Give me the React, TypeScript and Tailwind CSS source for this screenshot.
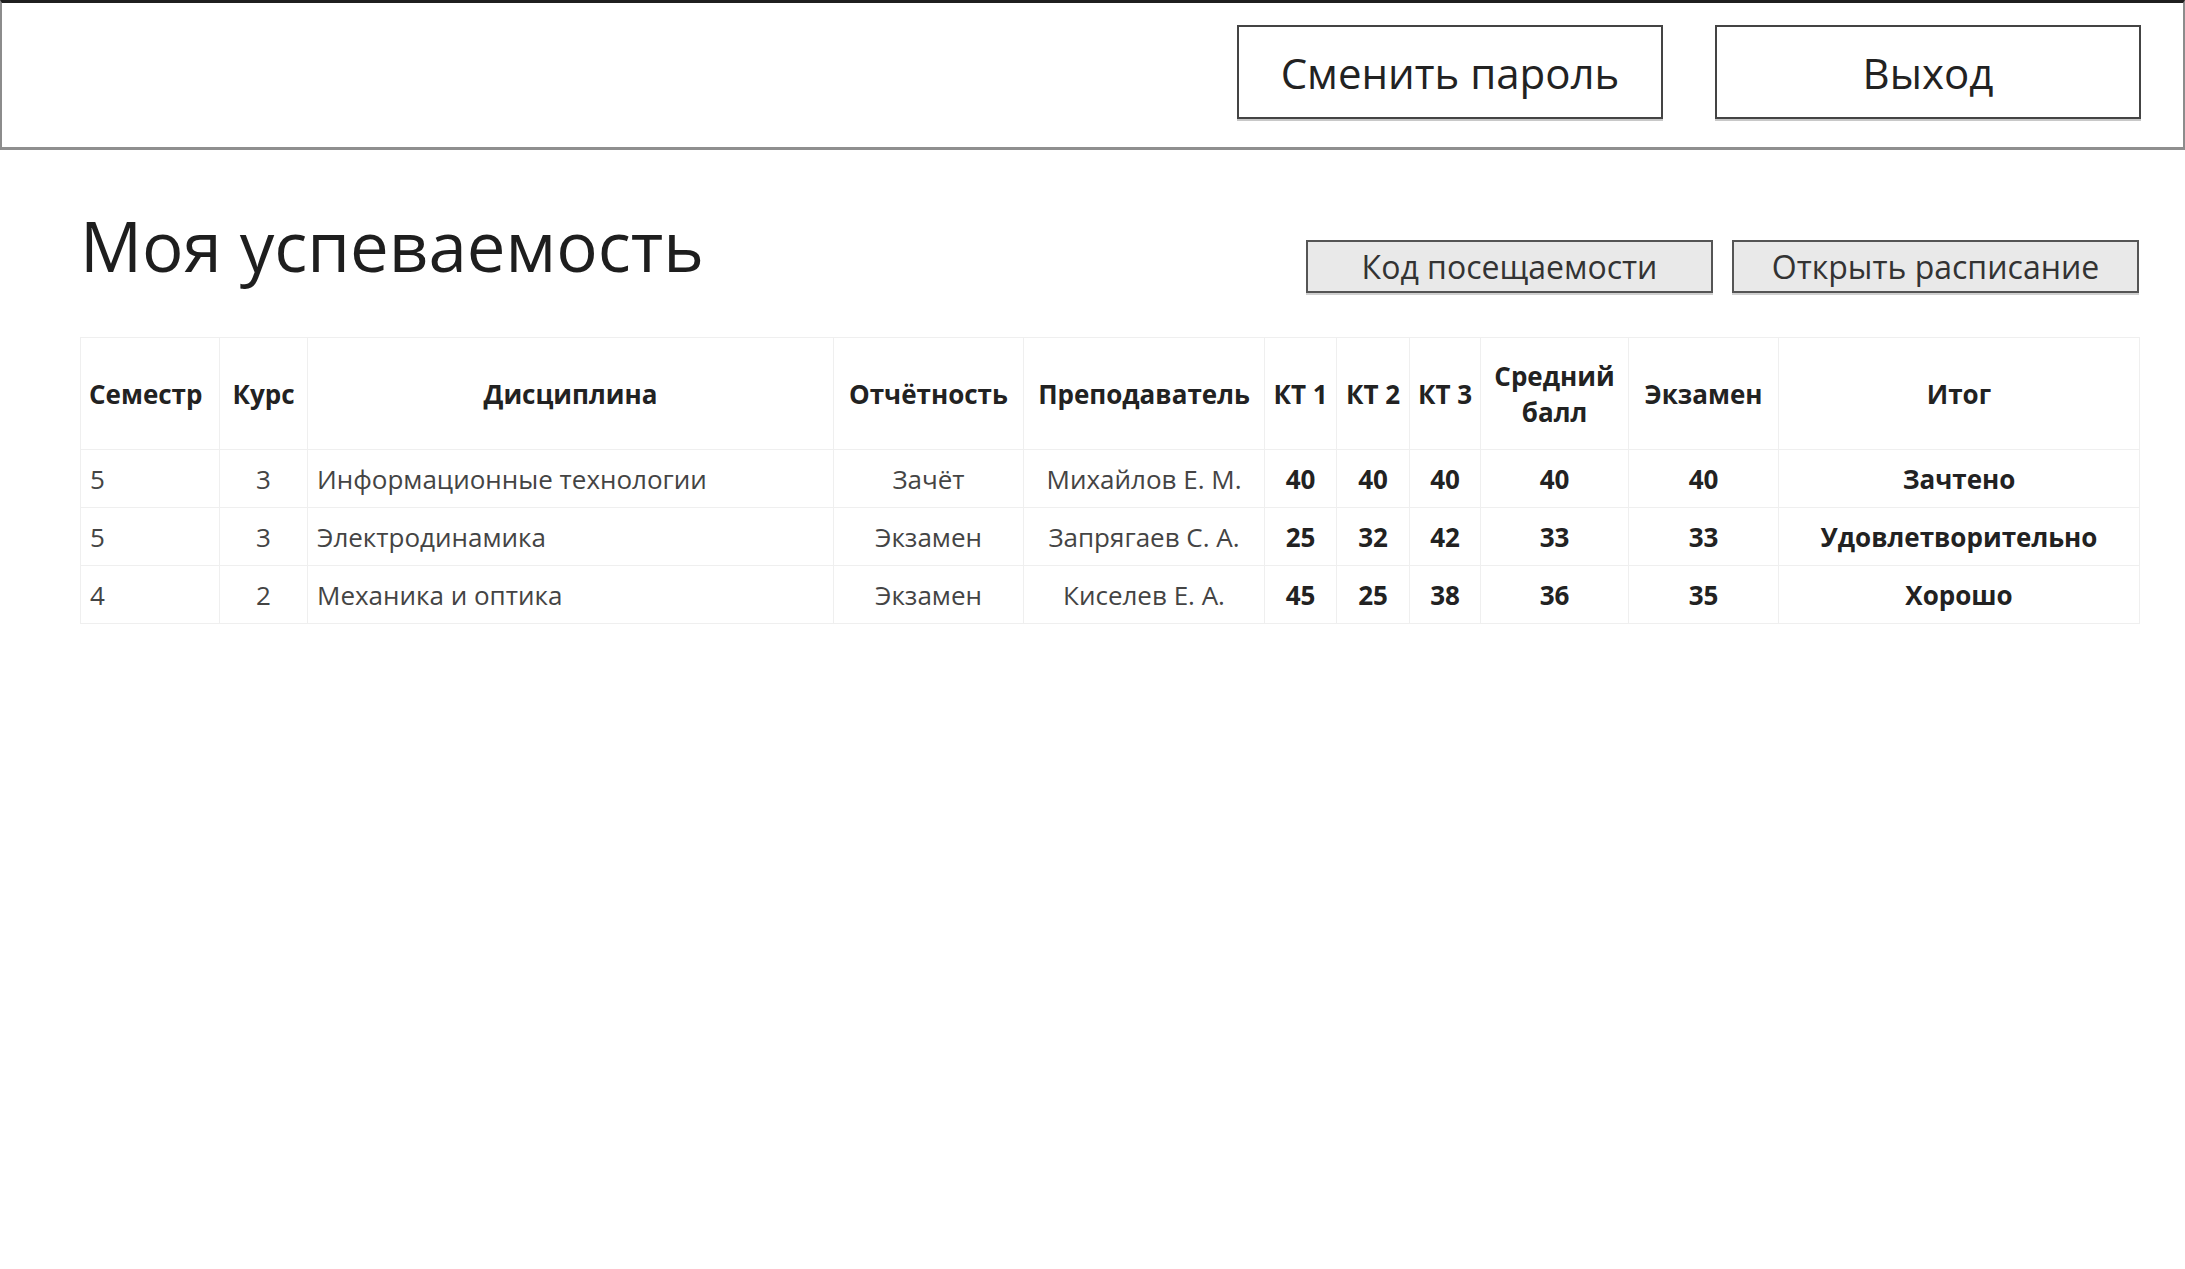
import React from 'react';

type Row = {
  sem: string;
  course: string;
  subject: string;
  report: string;
  teacher: string;
  kt1: string;
  kt2: string;
  kt3: string;
  avg: string;
  exam: string;
  result: string;
};

const ROWS: Row[] = [
  { sem: '5', course: '3', subject: 'Информационные технологии', report: 'Зачёт', teacher: 'Михайлов Е. М.', kt1: '40', kt2: '40', kt3: '40', avg: '40', exam: '40', result: 'Зачтено' },
  { sem: '5', course: '3', subject: 'Электродинамика', report: 'Экзамен', teacher: 'Запрягаев С. А.', kt1: '25', kt2: '32', kt3: '42', avg: '33', exam: '33', result: 'Удовлетворительно' },
  { sem: '4', course: '2', subject: 'Механика и оптика', report: 'Экзамен', teacher: 'Киселев Е. А.', kt1: '45', kt2: '25', kt3: '38', avg: '36', exam: '35', result: 'Хорошо' },
];

const th = 'border border-[#efefef] px-[8px] font-bold text-[26px] leading-[36px] text-[#222]';
const td = 'border border-[#efefef] px-[9px] h-[58px] text-[26px] leading-[36px]';

export default function App() {
  return (
    <div className="min-h-screen bg-white font-['Open_Sans',sans-serif] text-[#222]">
      {/* Top bar */}
      <header className="h-[150px] border-t-[3px] border-t-[#1f1f1f] border-x-2 border-x-[#8c8c8c] border-b-[3px] border-b-[#8f8f8f] flex items-start justify-end gap-[52px] pt-[22px] pr-[42px]">
        <button className="w-[426px] h-[94px] border-2 border-[#444] bg-white text-[42px] text-[#222] shadow-[0_2px_0_#c8c8c8]">
          Сменить пароль
        </button>
        <button className="w-[426px] h-[94px] border-2 border-[#444] bg-white text-[42px] text-[#222] shadow-[0_2px_0_#c8c8c8]">
          Выход
        </button>
      </header>

      <main className="pl-[80px] pr-[46px]">
        {/* Title row */}
        <div className="flex items-start justify-between pt-[47px] h-[187px]">
          <h1 className="text-[69px] leading-[96px] font-normal text-[#1e1e1e]">Моя успеваемость</h1>
          <div className="flex gap-[19px] mt-[43px]">
            <button className="w-[407px] h-[53px] border-2 border-[#555] bg-[#e9e9e9] text-[32px] leading-none text-[#333] shadow-[0_2px_0_#d0d0d0]">
              Код посещаемости
            </button>
            <button className="w-[407px] h-[53px] border-2 border-[#555] bg-[#e9e9e9] text-[32px] leading-none text-[#333] shadow-[0_2px_0_#d0d0d0]">
              Открыть расписание
            </button>
          </div>
        </div>

        {/* Grades table */}
        <table className="w-[2059px] table-fixed border-collapse">
          <colgroup>
            <col className="w-[139px]" />
            <col className="w-[88px]" />
            <col className="w-[526px]" />
            <col className="w-[190px]" />
            <col className="w-[241px]" />
            <col className="w-[72px]" />
            <col className="w-[73px]" />
            <col className="w-[71px]" />
            <col className="w-[148px]" />
            <col className="w-[150px]" />
            <col className="w-[361px]" />
          </colgroup>
          <thead>
            <tr className="h-[112px]">
              <th className={`${th} text-left`}>Семестр</th>
              <th className={`${th} text-center`}>Курс</th>
              <th className={`${th} text-center`}>Дисциплина</th>
              <th className={`${th} text-center`}>Отчётность</th>
              <th className={`${th} text-center`}>Преподаватель</th>
              <th className={`${th} text-center !px-0 whitespace-nowrap`}>КТ 1</th>
              <th className={`${th} text-center !px-0 whitespace-nowrap`}>КТ 2</th>
              <th className={`${th} text-center !px-0 whitespace-nowrap`}>КТ 3</th>
              <th className={`${th} text-center`}>Средний балл</th>
              <th className={`${th} text-center`}>Экзамен</th>
              <th className={`${th} text-center`}>Итог</th>
            </tr>
          </thead>
          <tbody>
            {ROWS.map((r, i) => (
              <tr key={i}>
                <td className={`${td} text-left text-[#444]`}>{r.sem}</td>
                <td className={`${td} text-center text-[#444]`}>{r.course}</td>
                <td className={`${td} text-left text-[#444]`}>{r.subject}</td>
                <td className={`${td} text-center text-[#444]`}>{r.report}</td>
                <td className={`${td} text-center text-[#444]`}>{r.teacher}</td>
                <td className={`${td} text-center font-bold !px-0`}>{r.kt1}</td>
                <td className={`${td} text-center font-bold !px-0`}>{r.kt2}</td>
                <td className={`${td} text-center font-bold !px-0`}>{r.kt3}</td>
                <td className={`${td} text-center font-bold`}>{r.avg}</td>
                <td className={`${td} text-center font-bold`}>{r.exam}</td>
                <td className={`${td} text-center font-bold`}>{r.result}</td>
              </tr>
            ))}
          </tbody>
        </table>
      </main>
    </div>
  );
}
